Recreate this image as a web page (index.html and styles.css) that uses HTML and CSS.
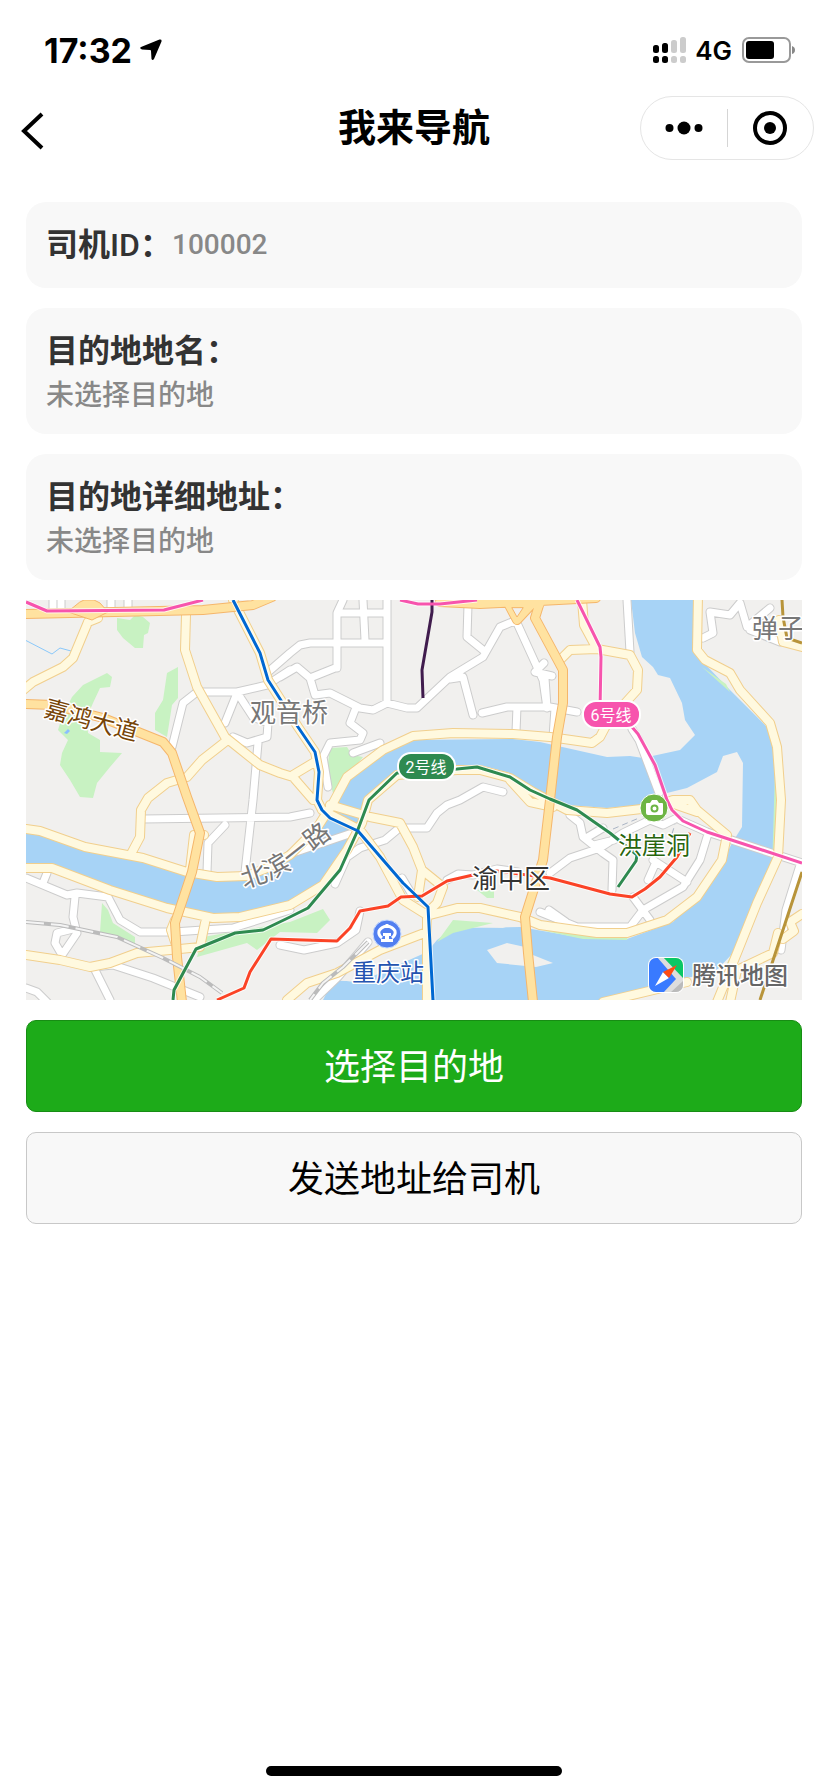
FILE: index.html
```html
<!DOCTYPE html>
<html lang="zh-CN">
<head>
<meta charset="utf-8">
<meta name="viewport" content="width=device-width, initial-scale=1">
<title>我来导航</title>
<link rel="stylesheet" href="styles.css">
</head>
<body>
<div class="status">
  <div class="status-left">
    <span class="clock">17:32</span>
    <svg class="location" viewBox="0 0 22 22" aria-hidden="true"><path d="M1 8 19.500.500Q22 0 21.500 2.500L14 20Q12.500 22 11.500 20L11 12Q11 11 10 11L2 10.500Q-1 9.500 1 8Z"/></svg>
  </div>
  <div class="status-right">
    <svg class="signal" viewBox="0 0 34 27" aria-hidden="true">
      <rect x="0" y="8" width="6" height="8" rx="2.500"/><rect x="9" y="6" width="6" height="10" rx="2.500"/>
      <rect x="0" y="19" width="6" height="7" rx="2.500"/><rect x="9" y="19" width="6" height="7" rx="2.500"/>
      <g fill="#ccc"><rect x="18" y="3" width="6" height="13" rx="2.500"/><rect x="27" y="0" width="6" height="16" rx="2.500"/><rect x="18" y="19" width="6" height="7" rx="2.500"/><rect x="27" y="19" width="6" height="7" rx="2.500"/></g>
    </svg>
    <span class="network">4G</span>
    <svg class="battery" viewBox="0 0 54 26" aria-hidden="true"><rect x="1" y="1" width="47" height="24" rx="6" fill="none" stroke="#999" stroke-width="2"/><rect x="4" y="4" width="28" height="18" rx="3"/><path d="M50 9Q53 10 53 13T50 17Z" fill="#888"/></svg>
  </div>
</div>

<header class="nav">
  <button class="back" type="button" aria-label="返回"><svg viewBox="0 0 24 38" aria-hidden="true"><path d="M21 2 3 19 21 36"/></svg></button>
  <h1 class="title">我来导航</h1>
  <div class="capsule">
    <button type="button" aria-label="更多"><svg viewBox="0 0 38 14" width="38" height="14" aria-hidden="true"><circle cx="4.500" cy="7" r="4"/><circle cx="19" cy="7" r="6.500"/><circle cx="33.500" cy="7" r="4"/></svg></button>
    <button type="button" aria-label="关闭"><svg viewBox="0 0 34 34" width="34" height="34" aria-hidden="true"><circle cx="17" cy="17" r="15" fill="none" stroke="#000" stroke-width="4"/><circle cx="17" cy="17" r="6"/></svg></button>
  </div>
</header>

<main class="content">
  <section class="card card-inline"><h2 class="label">司机<span class="latin">ID</span>：</h2><p class="value">100002</p></section>
  <section class="card"><h2 class="label">目的地地名：</h2><p class="value">未选择目的地</p></section>
  <section class="card"><h2 class="label">目的地详细地址：</h2><p class="value">未选择目的地</p></section>

  <svg class="map" viewBox="0 0 776 400" preserveAspectRatio="xMidYMid slice" role="img" aria-label="地图">
    <defs>
      <path id="streets" d="M117 219 264 217 284 213M232 143 227 200 219 272M199 225 182 243 181 272M146 147 157 103 171 92 211 92 241 85 264 70M211 93 199 123M214 97 227 117 242 123 241 137 221 143 207 137M241 73 264 53 274 45 284 43 357 43M311 68V13L317 0M337 0 339 40M314 13H357M361 0V103M254 77 271 67 284 78 289 95 304 93 334 108 347 110 361 103 381 108 391 108 424 77 457 57 474 27 491 20M284 78 309 68M442 5 441 37 457 50M424 79 437 77 447 115M456 113 481 107 524 107 551 112M491 107 490 132M491 23 517 80 521 108M329 110 324 123 337 133 334 140 304 143 297 157 302 187M327 153 354 143M27 0V11M35 0V11M85 0V11M102 0V11M601 0 604 52M518 63 509 72 526 76M519 78 521 107M529 108 527 137M677 38 687 33 684 12 704 15 714 3 721 27 744 8M724 30 754 42M606 129 613 140 633 193M524 273 544 258 574 248 597 233 624 220 637 225 651 218M544 215 554 223 557 237 577 253 587 260 586 290M560 238 577 228M568 245 588 240M627 260 661 282M622 280 630 262M681 237 674 260 657 287 617 310 604 327 551 327 514 312M607 297 624 320M379 228 401 228 411 213 421 205 434 200 457 187 477 192M0 278 41 295 51 293 82 297 94 320 114 332 147 332 207 328 264 310M49 297 47 317 51 333 36 355 29 343 31 333 47 329M21 273 17 283M69 370 84 400M67 367 87 365 127 378 174 397M0 388 11 392 21 402M264 254 332 231M371 230 359 240 334 248 321 257 309 284M254 345 278 350 311 343 330 330 334 311M376 278 385 293M421 280 432 274 447 275 471 269 492 272M654 220 681 232 776 263M774 265 760 310 755 350M523 310 540 322M288 400 312 377 342 342"/>
      <path id="yellow-roads" d="M62 22 47 58 37 67 7 82-5 92M62 22 72 18M160 15 159 50 171 87 199 137 234 165 254 173 267 177 287 200M267 175 287 163M199 142 176 160 161 177 141 183 122 198 115 210 114 237 106 252M207 0 234 53 242 80 272 127 289 152 293 172 291 200 296 210M0 229 14 231 59 247 117 258 161 272 191 277 221 276 241 268 264 255 291 228 307 203 321 177 357 150 387 136 427 133 487 134 524 137 566 143 574 137 582 122 611 90 612 70 604 55 571 49 544 50 534 60M556 0 558 25 571 49M0 268 26 268 84 290 141 308 187 318 214 317 264 305 297 285 321 250 336 223 342 200 371 175 431 170 454 170 484 178 507 192 541 210 581 213 624 208 647 200 664 200 671 210 701 235 696 260 671 297 641 320 601 333 571 333 514 325 494 317 454 308 431 308 404 315M304 205 344 217 374 223 387 247 396 270 417 287 411 303 401 313M396 270 392 297M296 210 334 230 354 257 377 300 401 315M401 315V400M401 332 354 350 311 373 281 383 261 400M672-5 671 50 679 60 704 73 714 90 744 123 751 147 755 200 752 257 731 303 711 353 691 402M752 333 747 353 711 370 704 402M661 382 577 402M484 180 504 202 527 207M0 355 34 360 64 367 84 363 111 353 144 350 174 347 179 323M164 270 168 235 178 235M149 320 145 330 150 345M642 202 671 212M753 20 757 42 776 47M776 314 764 322 768 331 757 339"/>
      <path id="orange-roads" d="M0 14 177 10 227 5 246-3M0 104 27 105 77 118 137 142 146 153 161 197 174 233 166 272 149 323 151 357 156 402M414 2 454 4 514 1 570-2M514 2 509 18 537 70 537 103 531 137 524 200 517 260 499 317 502 353 507 402M483 5 491 20 505 5"/>
      <path id="river-road-label" d="M218 288Q250 280 267 266T312 232"/>
    </defs>
    <rect width="776" height="400" fill="#f1f0ee"/>
    <g fill="#a7d3f6">
      <path d="M0 233 14 233 59 249 117 260 161 274 191 279 241 270 291 230 307 203 321 179 357 153 387 140 487 139 514 142 581 157 604 156 617 158 654 150 669 135 659 120 656 103 644 78 632 75 627 67 616 57 609 33 605 0H667L669 50 677 62 704 90 744 130 749 157 752 200 749 253 734 293 707 353 690 371 657 379 577 400H297L307 380 334 382 401 352 411 340 427 328 494 327 557 338 601 339 647 322 694 267 706 243 716 227 717 163 711 152 697 156 691 172 661 188 641 193 614 205 581 208 541 205 507 188 484 173 454 165 371 170 342 195 332 230 321 247 297 281 264 301 214 313 187 314 141 304 84 286 26 264H0Z"/>
    </g>
    <path d="M461 350 481 343 499 347 507 355 527 363 510 367 471 363ZM445 327 463 323 480 328ZM307 380 334 382 350 370 315 372Z" fill="#f1f0ee"/>
    <g fill="#c8f2c2">
      <path d="M91 18 104 20 109 15 117 17 124 23 122 33 118 35 117 48 109 48 97 38 91 30Z"/>
      <path d="M46 97 57 85 81 73 86 77 84 87 74 88 67 103 61 117 62 133 74 140 74 152 96 153 84 167 71 183 67 198 54 197 44 180 34 165 36 153 42 140 32 130 36 117Z"/>
      <path d="M152 67V98L146 105 141 137 129 130V113L137 100 141 73Z"/>
      <path d="M76 303 82 310 87 323 109 337V345L94 337 74 332ZM177 337 264 322 297 309 304 320 291 333 254 332 231 350 221 343 171 357Z"/>
      <path d="M304 148 321 147 326 155 337 157 321 177 307 193 301 170ZM411 342 427 320 467 323 427 333ZM451 290 468 286V298L461 298ZM514 330 557 339 601 340 602 336 570 336ZM676 67 704 92 700 84ZM749 170 753 200 750 256 746 270ZM701 363 712 342 718 340 708 370Z"/>
    </g>
    <path d="M38 133 42 129 44 131 41 134Z" fill="#8abfff"/>
    <path d="M-1 40 26 54 34 48 45 51" fill="none" stroke="#8ac8fa"/>
    <g fill="none" stroke-linejoin="round" stroke-linecap="round">
      <use href="#streets" stroke="#ccc" stroke-width="9"/><use href="#streets" stroke="#fff" stroke-width="7"/>
      <use href="#yellow-roads" stroke="#f1cf8d" stroke-width="10"/><use href="#yellow-roads" stroke="#fff9df" stroke-width="8"/>
      <use href="#orange-roads" stroke="#f5b66b" stroke-width="10"/><use href="#orange-roads" stroke="#ffe2a0" stroke-width="8"/>
      <path d="M54 2 58 0 68 0 74 3 82 12 66 20 54 16 42 12Z" fill="#ffe2a0" stroke="#f5b66b" stroke-width="1"/>
      <path d="M477 0 485 8 516 8 520 0Z" fill="#ffe2a0"/>
      <path d="M486 8 491 17 497 8Z" fill="#f1f0ee" stroke="#f5b66b"/>
      <g stroke-linecap="butt">
        <path d="M587 229 613 218M646 234 649 224" stroke="#aab4c4" stroke-width="1" stroke-dasharray="6 4"/>
        <path d="M0 322 34 325 91 337 137 358 174 377 196 393M342 342 317 367 297 383 284 400" stroke="#bbb" stroke-width="4"/>
        <path d="M0 322 34 325 91 337 137 358 174 377 196 393M342 342 317 367 297 383 284 400" stroke="#f4f4f4" stroke-width="2" stroke-dasharray="18 7"/>
      </g>
    </g>
    <g fill="none" stroke-linejoin="round" stroke="#fff" stroke-opacity=".75" stroke-width="5">
      <path d="M0 2 21 11 138 10 177 0M374 0 392 4 414 4 451 0M147 400 148 390 170 349 209 333 237 330 264 317 282 308 314 270 331 232 343 200 371 173 431 169 451 167 484 177 504 190 524 199 551 210 584 233 611 255 610 261 592 287M191 400 218 388 224 372 245 339 311 341 324 328 334 311 362 306 375 297 396 296 421 281 447 275 471 271 524 278 584 294 606 297 619 289 634 277 651 257 664 233M207 0 234 53 242 80 272 127 289 152 293 172 291 200 296 210 304 218 332 231 377 283 402 307 407 400M551 0 574 47 575 57 574 110M606 127 612 134 629 165 641 200 646 210 657 221 681 232 776 263"/>
    </g>
    <g fill="none" stroke-linejoin="round" stroke-width="3">
      <path d="M756 0 757 17 761 38 776 43M776 272 734 400" stroke="#b8943a"/>
      <path d="M191 400 218 388 224 372 245 339 311 341 324 328 334 311 362 306 375 297 396 296 421 281 447 275 471 271 524 278 584 294 606 297 619 289 634 277 651 257 664 233" stroke="#fb4326"/>
      <path d="M147 400 148 390 170 349 209 333 237 330 264 317 282 308 314 270 331 232 343 200 371 173 431 169 451 167 484 177 504 190 524 199 551 210 584 233 611 255 610 261 592 287" stroke="#2e8a50"/>
      <path d="M207 0 234 53 242 80 272 127 289 152 293 172 291 200 296 210 304 218 332 231 377 283 402 307 407 400" stroke="#0068d2"/>
      <path d="M406 0V12L396 70 397 98" stroke="#401c4d"/>
      <path d="M0 2 21 11 138 10 177 0M374 0 392 4 414 4 451 0M551 0 574 47 575 57 574 110M606 127 612 134 629 165 641 200 646 210 657 221 681 232 776 263" stroke="#f754ad"/>
    </g>
    <g stroke="#fff" stroke-width="2">
      <rect x="372" y="153" width="57" height="27" rx="13" fill="#2e8a50"/>
      <rect x="557" y="101" width="57" height="27" rx="13" fill="#f754ad"/>
    </g>
    <g class="line-name" text-anchor="middle"><text x="400" y="173">2号线</text><text x="585" y="121">6号线</text></g>

    <circle cx="628" cy="208" r="14" fill="#6db544" stroke="#fff"/>
    <path d="M621 203H624L626 200H631L633 203H636Q637 203 637 204V213Q637 215 635 215H622Q620 215 620 213V204Q620 203 621 203Z" fill="#fff"/><circle cx="628.500" cy="208.500" r="3" fill="none" stroke="#6db544" stroke-width="2"/>
    <circle cx="361" cy="334" r="14" fill="#527ff0" stroke="#c9dcff"/>
    <path d="M356 338Q352 335 353 331Q355 327 361 326Q367 327 369 331Q370 335 366 338M361 324V328" fill="none" stroke="#fff" stroke-width="3"/>
    <path d="M357 333H365V336H363V339H367V342H355V339H359V336H357Z" fill="#fff"/>

    <g class="place">
      <text x="0" y="0" transform="translate(17 116) rotate(15)" class="road-major">嘉鸿大道</text>
      <text x="224" y="122" class="district">观音桥</text>
      <text x="726" y="38" class="district">弹子</text>
      <text class="road-river"><textPath href="#river-road-label">北滨一路</textPath></text>
      <text x="446" y="288" class="city">渝中区</text>
      <text x="592" y="254" class="sight">洪崖洞</text>
      <text x="326" y="381" class="station">重庆站</text>
      <text x="666" y="384" class="brand">腾讯地图</text>
    </g>
    <svg x="622" y="357" width="36" height="36" viewBox="0 0 36 36">
      <clipPath id="logo-shape"><rect x="1" y="1" width="34" height="34" rx="7"/></clipPath>
      <rect width="36" height="36" rx="8" fill="#fff"/>
      <g clip-path="url(#logo-shape)"><path fill="#ddd" d="M0 0H36V36H0Z"/><path fill="#397aff" d="M0 0H9L28 22 15 36H0Z"/><path fill="#0ac765" d="M15 0H36V22Z"/><path fill="#bbb" d="M22 36 36 23V36Z"/><path fill="#fff" d="M7 29 15 15 21 21Z"/><path fill="#ff4b13" d="M29 8 15 15 21 21Z"/></g>
    </svg>
  </svg>

  <button class="action action-primary" type="button">选择目的地</button>
  <button class="action" type="button">发送地址给司机</button>
</main>
<div class="home-indicator"></div>
</body>
</html>
```
FILE: styles.css
```css
* { box-sizing: border-box; }

body {
  margin: 0;
  min-height: 100vh;
  display: flex;
  flex-direction: column;
  background: #fff;
  color: #000;
  font-family: Roboto, "Noto Sans CJK SC", sans-serif;
}

button { font: inherit; color: inherit; cursor: pointer; }
h1, h2, p { margin: 0; }

.status {
  display: flex;
  justify-content: space-between;
  height: 88px;
  padding: 12px 32px 0 44px;
  font-family: Inter, sans-serif;
}
.status-left, .status-right { display: flex; align-items: center; }
.status-left { gap: 8px; }
.clock { font-size: 34px; font-weight: 700; }
.location { width: 22px; height: 22px; }
.status-right { gap: 8px; }
.signal { width: 34px; height: 27px; }
.network { font-size: 26px; font-weight: 600; }
.battery { width: 54px; height: 26px; margin-left: 2px; }

.nav {
  display: grid;
  grid-template-columns: 1fr auto 1fr;
  align-items: center;
  height: 80px;
  padding: 0 14px;
}
.back { justify-self: start; padding: 6px 0 0 6px; border: 0; background: none; }
.back svg { display: block; width: 26px; height: 38px; fill: none; stroke: #000; stroke-width: 4; }
.title { font-size: 38px; font-weight: 700; line-height: 56px; }
.capsule {
  justify-self: end;
  display: flex;
  width: 174px;
  height: 64px;
  border: 1px solid #e5e5e5;
  border-radius: 32px;
}
.capsule button {
  flex: 1;
  display: grid;
  place-items: center;
  margin: 12px 0;
  padding: 0;
  border: 0;
  background: none;
}
.capsule button + button { border-left: 1px solid #d5d5d5; }

.content {
  display: flex;
  flex-direction: column;
  gap: 20px;
  padding: 34px 26px;
}
.card { padding: 20px 20px 16px; border-radius: 20px; background: #f8f8f8; }
.card-inline { display: flex; align-items: center; padding-bottom: 20px; }
.label { color: #333; font-size: 32px; font-weight: 700; line-height: 46px; }
.latin { font-weight: 500; }
.value { color: #888; font-size: 28px; font-weight: 500; line-height: 44px; }

.map { display: block; width: 100%; height: 400px; }
.line-name { font-size: 16px; fill: #fff; }
.place { font-size: 24px; paint-order: stroke; stroke: #fff; stroke-width: 3px; stroke-linejoin: round; }
.road-major { fill: #774508; }
.road-river { font-size: 26px; fill: #777; }
.district { font-size: 26px; fill: #777; }
.city { font-size: 26px; fill: #333; }
.sight { fill: #28650d; }
.station { fill: #2453b0; }
.brand { fill: #666; font-weight: 500; }

.action {
  height: 92px;
  padding: 0 0 4px;
  border: 1px solid #c8c8c8;
  border-radius: 10px;
  background: #f8f8f8;
  font-size: 36px;
}
.action-primary { border-color: #178d14; background: #1dab19; color: #fff; }

.home-indicator {
  width: 296px;
  height: 10px;
  margin: auto auto 16px;
  border-radius: 5px;
  background: #000;
}
```
